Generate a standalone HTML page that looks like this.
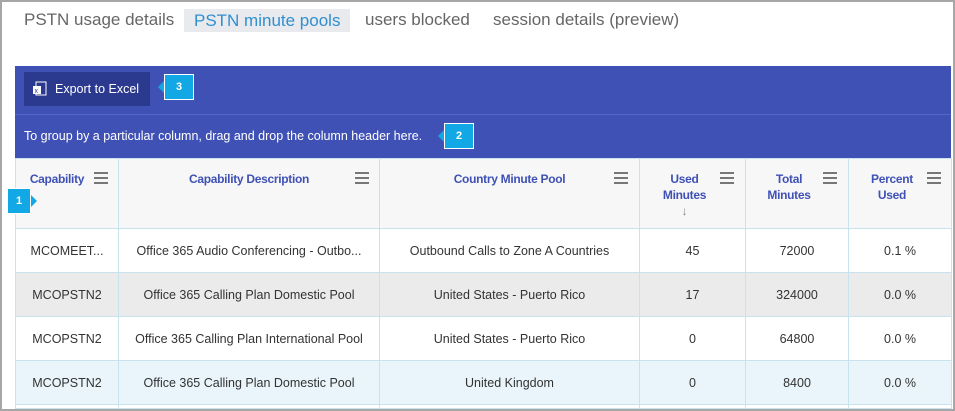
<!DOCTYPE html><html><head><style>
html,body{margin:0;width:955px;height:411px;overflow:hidden;}
body{position:relative;background:#fff;font-family:"Liberation Sans",sans-serif;}
.clip{position:absolute;left:0;top:0;width:955px;height:409px;overflow:hidden;}
.frame{position:absolute;left:0;top:0;width:951px;height:407px;border:2px solid #a6a6a6;z-index:5;pointer-events:none}
.tabs{position:absolute;top:10px;left:24px;font-size:17px;color:#666;}
.tabs span{position:absolute;white-space:nowrap;top:0;}
.sel{background:#e8eaed;color:#2f8fd1;padding:0 10px;top:-1px!important;height:23px;line-height:23px}
.bar{position:absolute;left:15px;top:66px;width:936px;height:92px;background:#3f51b5;}
.btn{position:absolute;left:9px;top:6px;width:126px;height:34px;background:#2b3a8f;color:#fff;font-size:12.5px;line-height:34px;}
.sep{position:absolute;left:0;top:48px;width:936px;height:1px;background:#5565c2}
.grp{position:absolute;left:9px;top:63px;color:#fff;font-size:12.5px}
.call{position:absolute;background:#12a8e6;color:#fff;font-size:11px;font-weight:bold;text-align:center;border:1px solid #fff;width:28px;height:24px;line-height:24px;}
.call.l:before{content:"";position:absolute;left:-7px;top:6px;border:6px solid transparent;border-right-color:#12a8e6;border-left:0}
.call.r:after{content:"";position:absolute;right:-7px;top:6px;border:6px solid transparent;border-left-color:#12a8e6;border-right:0}
table{position:absolute;left:15px;top:158px;border-collapse:collapse;font-size:12.5px;color:#333;}
td,th{border:1px solid #c9e3ee;text-align:center;padding:0;}
th{background:#f7f7f7;height:69px;vertical-align:top;color:#3f51b5;font-size:12px;letter-spacing:-0.3px;position:relative;}
th div{padding-top:12px;line-height:16px}
.m{position:absolute;top:13px;width:14px;height:2px;background:#777;box-shadow:0 5px #777,0 10px #777}
tr.r td{height:43px}
</style></head><body>
<div class="clip">
<div class="tabs"><span style="left:0">PSTN usage details</span><span class="sel" style="left:160px">PSTN minute pools</span><span style="left:341px">users blocked</span><span style="left:469px">session details (preview)</span></div>
<div class="bar"><div class="btn"><svg style="position:absolute;left:9px;top:9px" width="14" height="16"><rect x="3" y="1" width="10" height="13" fill="none" stroke="#fff"/><rect x="0" y="5" width="8" height="8" fill="#fff"/><text x="1.5" y="12" font-size="7" fill="#2b3a8f" font-family="Liberation Sans">x</text></svg><span style="position:absolute;left:31px">Export to Excel</span></div>
<div class="sep"></div><div class="grp">To group by a particular column, drag and drop the column header here.</div></div>
<div class="call l" style="left:164px;top:74px">3</div>
<div class="call l" style="left:444px;top:123px">2</div>
<table>
<tr><th style="width:102px"><div style="padding-right:20px">Capability</div><span class="m" style="left:78px"></span></th>
<th style="width:260px"><div>Capability Description</div><span class="m" style="left:236px"></span></th>
<th style="width:259px"><div>Country Minute Pool</div><span class="m" style="left:234px"></span></th>
<th style="width:105px"><div style="padding-right:16px">Used<br>Minutes<br><span style="color:#888;font-weight:normal">↓</span></div><span class="m" style="left:80px"></span></th>
<th style="width:102px"><div style="padding-right:16px">Total<br>Minutes</div><span class="m" style="left:77px"></span></th>
<th style="width:102px"><div style="padding-right:16px">Percent<br>Used</div><span class="m" style="left:78px"></span></th></tr>
<tr class="r"><td>MCOMEET...</td><td>Office 365 Audio Conferencing - Outbo...</td><td>Outbound Calls to Zone A Countries</td><td>45</td><td>72000</td><td>0.1 %</td></tr>
<tr class="r" style="background:#ebebeb"><td>MCOPSTN2</td><td>Office 365 Calling Plan Domestic Pool</td><td>United States - Puerto Rico</td><td>17</td><td>324000</td><td>0.0 %</td></tr>
<tr class="r"><td>MCOPSTN2</td><td>Office 365 Calling Plan International Pool</td><td>United States - Puerto Rico</td><td>0</td><td>64800</td><td>0.0 %</td></tr>
<tr class="r" style="background:#e9f5fa"><td>MCOPSTN2</td><td>Office 365 Calling Plan Domestic Pool</td><td>United Kingdom</td><td>0</td><td>8400</td><td>0.0 %</td></tr>
<tr><td style="height:3px"></td><td></td><td></td><td></td><td></td><td></td></tr>
</table>
<div class="call r" style="left:7px;top:188px;width:22px">1</div>
</div>
<div class="frame"></div>
</body></html>
